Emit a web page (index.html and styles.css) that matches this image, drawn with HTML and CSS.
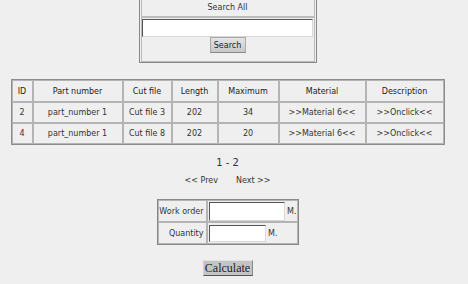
FILE: index.html
```html
<!DOCTYPE html>
<html lang="en">
  <head>
    <meta charset="UTF-8" />
    <title>Cut files</title>
    <link rel="stylesheet" href="styles.css">
  </head>
  <body>
    <div class="page">
      <table class="search-box">
        <tr>
          <td class="search-title">Search All</td>
        </tr>
        <tr>
          <td class="search-field">
            <input type="text" class="search-input" />
            <button class="search-btn">Search</button>
          </td>
        </tr>
      </table>

      <table class="parts">
        <tr>
          <th class="col-id">ID</th>
          <th class="col-part">Part number</th>
          <th class="col-cut">Cut file</th>
          <th class="col-len">Length</th>
          <th class="col-max">Maximum</th>
          <th class="col-mat">Material</th>
          <th class="col-desc">Description</th>
        </tr>
        <tr>
          <td>2</td>
          <td>part_number 1</td>
          <td>Cut file 3</td>
          <td>202</td>
          <td>34</td>
          <td>&gt;&gt;Material 6&lt;&lt;</td>
          <td>&gt;&gt;Onclick&lt;&lt;</td>
        </tr>
        <tr>
          <td>4</td>
          <td>part_number 1</td>
          <td>Cut file 8</td>
          <td>202</td>
          <td>20</td>
          <td>&gt;&gt;Material 6&lt;&lt;</td>
          <td>&gt;&gt;Onclick&lt;&lt;</td>
        </tr>
      </table>

      <p class="range">1 - 2</p>
      <p class="pager">
        <a href="#">&lt;&lt; Prev</a>
        <a href="#">Next &gt;&gt;</a>
      </p>

      <table class="calc">
        <tr>
          <td class="calc-label">Work order</td>
          <td class="calc-field"><input type="text" class="calc-input wide" /> M.</td>
        </tr>
        <tr>
          <td class="calc-label">Quantity</td>
          <td class="calc-field"><input type="text" class="calc-input short" /> M.</td>
        </tr>
      </table>

      <button class="calc-btn">Calculate</button>
    </div>
  </body>
</html>
```

FILE: styles.css
```css
body {
  margin: 0;
  background-color: #efefef;
  font-family: "DejaVu Sans", Verdana, sans-serif;
  font-size: 8px;
  color: #333;
}

.page {
  width: 455px;
  margin-top: -2px;
  text-align: center;
}

table {
  margin: 0 auto;
  border-collapse: separate;
}

/* search */

.search-box {
  width: 178px;
  border: 1px solid #888;
  border-spacing: 1px 0;
}

.search-box td {
  border: 1px solid #bbb;
  padding: 0;
}

.search-title {
  line-height: 16px;
}

.search-field {
  padding: 1px 0 8px !important;
}

.search-input {
  display: block;
  box-sizing: border-box;
  width: 171px;
  height: 18px;
  margin: 0;
  border: 1px solid;
  border-color: #555 #d8d8d8 #d8d8d8 #555;
  background: #fff;
}

.search-btn {
  display: block;
  width: 36px;
  height: 16px;
  margin: 0 auto;
  padding: 0;
  border: 1px solid #aaa;
  border-bottom-color: #888;
  background: linear-gradient(#e4e4e4, #c8c8c8);
  font-family: "DejaVu Sans", sans-serif;
  font-size: 8px;
  color: #222;
}

/* parts table */

.parts {
  width: 434px;
  margin-top: 16px;
  border: 1px solid #8c8c8c;
  border-spacing: 0;
}

.parts th,
.parts td {
  box-sizing: border-box;
  border: 1px solid #b4b4b4;
  padding: 0;
  height: 21px;
  font-weight: normal;
  color: #333;
}

.parts th {
  height: 22px;
  color: #222;
}

.col-id { width: 21px; }
.col-part { width: 90px; }
.col-cut { width: 49px; }
.col-len { width: 46px; }
.col-max { width: 61px; }
.col-mat { width: 87px; }
.col-desc { width: 78px; }

/* paging */

.range {
  margin: 12px 0 0;
  font-size: 10px;
  line-height: 12px;
}

.pager {
  display: flex;
  justify-content: center;
  gap: 18px;
  margin: 6px 0 0;
  line-height: 12px;
}

.pager a {
  color: #333;
  text-decoration: none;
}

/* calculator */

.calc {
  width: 142px;
  margin-top: 12px;
  border: 1px solid #888;
  border-spacing: 0;
}

.calc td {
  box-sizing: border-box;
  border: 1px solid #b4b4b4;
  padding: 0;
  height: 22px;
}

.calc-label {
  width: 49px;
  padding-right: 2px !important;
  text-align: right;
}

.calc-field {
  padding-left: 1px !important;
  text-align: left;
}

.calc-input {
  box-sizing: border-box;
  margin: 0;
  vertical-align: middle;
  border: 1px solid;
  border-color: #555 #d8d8d8 #d8d8d8 #555;
  background: #fff;
}

.calc-input.wide {
  width: 76px;
  height: 19px;
}

.calc-input.short {
  width: 57px;
  height: 17px;
}

.calc-btn {
  display: block;
  width: 50px;
  height: 16px;
  margin: 15px auto 0;
  padding: 0;
  border: 1px solid;
  border-color: #e2e2e2 #888 #555 #d0d0d0;
  background: #c4c4c4;
  font-family: "Liberation Serif", serif;
  font-size: 12px;
  line-height: 14px;
  color: #222;
}
```
